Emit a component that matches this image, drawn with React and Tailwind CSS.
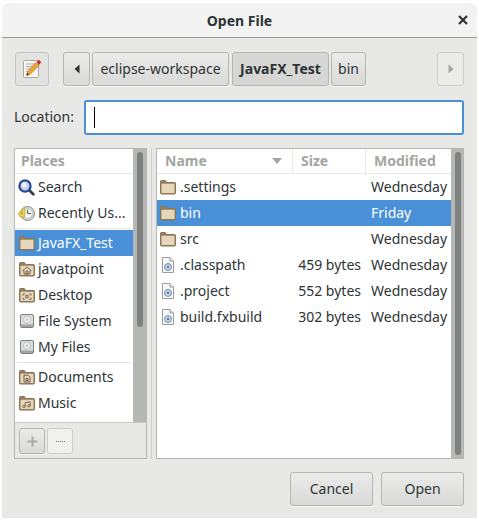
const font = { fontFamily: '"Noto Sans", sans-serif' };

function Folder({ badge }) {
  return (
    <svg width="16" height="16" viewBox="0 0 16 16" className="shrink-0">
      <path d="M0.5 14V2.3C0.5 1.8 0.8 1.5 1.3 1.5H5.3L6.8 3.5H14.5C15.1 3.5 15.5 3.9 15.5 4.5V14C15.5 14.6 15.1 15 14.5 15H1.5C0.9 15 0.5 14.6 0.5 14Z" fill="#94805f" stroke="#8a7554" strokeWidth="1" />
      <path d="M1.5 5.6C1.5 5.1 1.8 4.8 2.3 4.8H13.8C14.2 4.8 14.5 5.1 14.5 5.5V13.4C14.5 13.8 14.2 14 13.8 14H2.2C1.8 14 1.5 13.8 1.5 13.4Z" fill="#e6d6bb" />
      {badge === "home" && <path d="M8 6L3.8 9.6H5V13H11V9.6H12.2ZM7 10H9V13H7Z" fill="none" stroke="#6f5d42" strokeWidth="0.9" />}
      {badge === "desktop" && <path d="M4 7H5.8M10.2 7H12M4 7V8.6M12 7V8.6M4 10.8V12.4H5.8M12 10.8V12.4H10.2M6.8 8.3H9.2V10.8H6.8Z" fill="none" stroke="#6f5d42" strokeWidth="0.9" />}
      {badge === "doc" && <path d="M5 6.2H9L11 8.2V13H5ZM7 9.5H9V11.5H7Z" fill="none" stroke="#6f5d42" strokeWidth="1" />}
      {badge === "music" && <path d="M6.2 11.5V7.6L11.2 6.8V10.8M6.2 11.5A1.3 1.1 0 1 1 3.6 11.5A1.3 1.1 0 1 1 6.2 11.5ZM11.2 10.8A1.3 1.1 0 1 1 8.6 10.8A1.3 1.1 0 1 1 11.2 10.8Z" fill="none" stroke="#6f5d42" strokeWidth="0.9" />}
    </svg>
  );
}

function Doc() {
  return (
    <svg width="16" height="16" viewBox="0 0 16 16" className="shrink-0">
      <path d="M2.5 0.5H10L13.5 4V15.5H2.5Z" fill="#f7f7f6" stroke="#9b9e9b" />
      <path d="M10 0.5V4H13.5" fill="#e4e4e2" stroke="#9b9e9b" />
      <circle cx="8" cy="10" r="3.4" fill="#dfe7f1" stroke="#5f7fa6" />
      <circle cx="8" cy="10" r="1.4" fill="#5f7fa6" />
    </svg>
  );
}

function SearchIcon() {
  return (
    <svg width="17" height="17" viewBox="0 0 17 17" className="shrink-0">
      <path d="M10.5 10.5L15.3 15.3" stroke="#3c3c3c" strokeWidth="2.8" strokeLinecap="round" />
      <circle cx="7" cy="7" r="5.6" fill="#c4d3ec" stroke="#26479a" strokeWidth="2.2" />
      <circle cx="6.2" cy="6" r="2.4" fill="#eef3fb" />
    </svg>
  );
}

function RecentIcon() {
  return (
    <svg width="17" height="17" viewBox="0 0 17 17" className="shrink-0">
      <circle cx="9.5" cy="8.5" r="7" fill="#d9d9d6" stroke="#8d8d89" />
      <circle cx="9.7" cy="8.5" r="4.8" fill="#f6f6f5" stroke="#a9a9a6" strokeWidth="0.6" />
      <path d="M9.7 4.8V8.5H13" fill="none" stroke="#444" strokeWidth="0.9" />
      <path d="M0.4 8.6L5.8 2.5L7.2 6.2L6.4 12L2 12Z" fill="#ecd35a" stroke="#b89d2a" strokeWidth="0.7" />
      <path d="M4.5 5.5L3 8.5H5" fill="none" stroke="#b08d14" strokeWidth="0.8" />
    </svg>
  );
}

function DriveIcon() {
  return (
    <svg width="16" height="16" viewBox="0 0 16 16" className="shrink-0">
      <rect x="1.5" y="1.5" width="13" height="13" rx="1.5" fill="#dcdedb" stroke="#7d807d" />
      <rect x="2" y="11.5" width="12" height="2.5" fill="#a2a4a1" />
      <circle cx="8" cy="6.7" r="3.6" fill="#eceded" stroke="#b3b5b2" strokeWidth="0.7" />
      <circle cx="8" cy="6.7" r="1" fill="#b3b5b2" />
    </svg>
  );
}

function EditIcon() {
  return (
    <svg width="20" height="20" viewBox="0 0 20 20">
      <rect x="1.5" y="1.5" width="15" height="17" rx="1" fill="#f7f6f2" stroke="#a9a9a3" />
      <path d="M4 5H13M4 7.5H11M4 10H9M4 12.5H7" stroke="#9a9a94" strokeWidth="0.8" />
      <path d="M4.5 16.5L5.5 12.5L14 3.5L17 6.5L8.5 15Z" fill="#efa43a" stroke="#b5701a" strokeWidth="0.6" />
      <path d="M14.5 3L16 1.5C16.5 1 17.3 1 17.8 1.5L18.5 2.2C19 2.7 19 3.5 18.5 4L17 5.7Z" fill="#cf2030" />
      <path d="M4.5 16.5L5.2 13.7L7.2 15.7Z" fill="#3b3024" />
    </svg>
  );
}

function Place({ icon, label, selected }) {
  return (
    <div className={`flex h-[26px] items-center pl-[3px] gap-[3px] text-[14px] ${selected ? "bg-[#4a90d9] text-white" : "text-[#2e3436]"}`}>
      <span className="flex w-[17px] justify-center">{icon}</span>
      <span className="whitespace-nowrap pb-[2px]">{label}</span>
    </div>
  );
}

function FileRow({ icon, name, size, date, selected }) {
  return (
    <div className={`flex h-[26px] items-center text-[14px] ${selected ? "bg-[#4a90d9] text-white" : "text-[#2e3436]"}`}>
      <div className="flex w-[136px] items-center gap-[4px] pl-[3px]">{icon}<span className="pb-[2px]">{name}</span></div>
      <div className="w-[73px] pb-[2px] pr-[5px] text-right whitespace-nowrap">{size}</div>
      <div className="flex-1 pb-[2px] pl-[5px]">{date}</div>
    </div>
  );
}

const btn = "flex items-center justify-center rounded-[3px] border border-[#b5b6b2] bg-gradient-to-b from-[#ebebea] to-[#d9d9d7] text-[#2e3436] shadow-[0_1px_0_#ffffff80]";

export default function App() {
  return (
    <div style={font} className="h-[521px] w-[479px] bg-white pl-[2px] pr-[2px] pt-[3px] pb-[3px]">
      <div className="flex h-full flex-col overflow-hidden rounded-t-[8px] bg-[#e8e8e7]">
        <div className="flex h-[35px] shrink-0 items-center border-b border-[#999a96] bg-[#f3f3f3]">
          <div className="relative flex-1 text-center text-[14px] font-bold text-[#2e3436]">
            Open File
            <svg width="10" height="10" viewBox="0 0 10 10" className="absolute right-[9px] top-[5px]">
              <path d="M1 1L9 9M9 1L1 9" stroke="#2e3436" strokeWidth="2.2" />
            </svg>
          </div>
        </div>

        <div className="flex flex-1 flex-col pl-[12px] pr-[13px] pt-[14px]">
          <div className="flex h-[34px] items-center">
            <div className="ml-px flex h-[34px] w-[34px] items-center justify-center rounded-[3px] border border-[#c4c5c2] bg-[#e2e2e1]"><EditIcon /></div>
            <div className={`${btn} ml-[14px] h-[34px] w-[27px]`}>
              <svg width="6" height="10" viewBox="0 0 6 10"><path d="M5.5 0.5V9.5L0.5 5Z" fill="#2e3436" /></svg>
            </div>
            <div className={`${btn} ml-[2px] h-[34px] w-[137px] pb-[2px] text-[14px]`}>eclipse-workspace</div>
            <div className="ml-[3px] flex h-[34px] w-[97px] items-center justify-center rounded-[3px] border border-[#b5b6b2] bg-[#d6d6d4] pb-[2px] text-[14px] font-bold text-[#2e3436]">JavaFX_Test</div>
            <div className={`${btn} ml-[2px] h-[34px] w-[35px] pb-[2px] text-[14px]`}>bin</div>
            <div className="ml-[71px] flex h-[34px] w-[27px] items-center justify-center rounded-[3px] border border-[#cdcecb] bg-[#ebebea]">
              <svg width="6" height="10" viewBox="0 0 6 10"><path d="M0.5 0.5V9.5L5.5 5Z" fill="#a3a5a3" /></svg>
            </div>
          </div>

          <div className="mt-[14px] flex h-[35px] items-center">
            <span className="w-[70px] pb-[2px] text-[14px] text-[#2e3436]">Location:</span>
            <div className="flex h-[35px] flex-1 items-center rounded-[3px] border-2 border-[#4a90d9] bg-white pl-[8px]">
              <div className="h-[21px] w-px bg-black" />
            </div>
          </div>

          <div className="mt-[13px] flex h-[311px]">
            <div className="flex w-[133px] flex-col border border-[#b5b6b2]">
              <div className="flex min-h-0 flex-1">
                <div className="min-w-0 flex-1 bg-white">
                  <div className="flex h-[25px] items-center border-b border-[#e8e8e7] pb-[2px] pl-[6px] text-[14px] font-bold text-[#a3a5a2]">Places</div>
                  <Place icon={<SearchIcon />} label="Search" />
                  <Place icon={<RecentIcon />} label="Recently Us..." />
                  <div className="mx-[2px] mb-[1px] mt-[2px] h-px bg-[#e3e3e1]" />
                  <Place icon={<Folder />} label="JavaFX_Test" selected />
                  <Place icon={<Folder badge="home" />} label="javatpoint" />
                  <Place icon={<Folder badge="desktop" />} label="Desktop" />
                  <Place icon={<DriveIcon />} label="File System" />
                  <Place icon={<DriveIcon />} label="My Files" />
                  <div className="mx-[2px] mb-[1px] mt-[2px] h-px bg-[#e3e3e1]" />
                  <Place icon={<Folder badge="doc" />} label="Documents" />
                  <Place icon={<Folder badge="music" />} label="Music" />
                </div>
                <div className="w-[13px] shrink-0 bg-[#b5b7b4] pl-[4px] pr-[3px] pt-[3px]">
                  <div className="h-[175px] rounded-full bg-[#7e8180]" />
                </div>
              </div>
              <div className="flex h-[36px] shrink-0 items-start gap-[2px] border-t border-[#c9cac6] bg-[#e8e8e7] pl-[4px] pt-[5px]">
                <div className={`${btn} h-[26px] w-[26px] text-[#a3a5a2]`}>
                  <svg width="11" height="11" viewBox="0 0 11 11"><path d="M5.5 0.5V10.5M0.5 5.5H10.5" stroke="#a8aaa7" strokeWidth="2" /></svg>
                </div>
                <div className="flex h-[26px] w-[26px] items-center justify-center rounded-[3px] border border-[#cdcecb] bg-[#f0f0ef]">
                  <div className="w-[9px] border-t border-dotted border-[#777]" />
                </div>
              </div>
            </div>

            <div className="ml-[4px] w-px bg-[#cdcecb]" />
            <div className="ml-[4px] flex flex-1 border border-[#b5b6b2]">
              <div className="min-w-0 flex-1 bg-white">
                <div className="flex h-[25px] items-center border-b border-[#e8e8e7] text-[14px] font-bold text-[#a3a5a2]">
                  <div className="flex h-full w-[136px] items-center justify-between border-r border-[#e8e8e7] pb-[2px] pl-[8px] pr-[10px]">
                    <span>Name</span>
                    <svg width="10" height="6" viewBox="0 0 10 6" className="mt-[2px]"><path d="M0 0H10L5 6Z" fill="#a3a5a2" /></svg>
                  </div>
                  <div className="flex h-full w-[73px] items-center border-r border-[#e8e8e7] pb-[2px] pl-[8px]">Size</div>
                  <div className="pb-[2px] pl-[8px]">Modified</div>
                </div>
                <FileRow icon={<Folder />} name=".settings" date="Wednesday" />
                <FileRow icon={<Folder />} name="bin" date="Friday" selected />
                <FileRow icon={<Folder />} name="src" date="Wednesday" />
                <FileRow icon={<Doc />} name=".classpath" size="459 bytes" date="Wednesday" />
                <FileRow icon={<Doc />} name=".project" size="552 bytes" date="Wednesday" />
                <FileRow icon={<Doc />} name="build.fxbuild" size="302 bytes" date="Wednesday" />
              </div>
              <div className="w-[12px] shrink-0 bg-[#b5b7b4] pb-[3px] pl-[4px] pr-[2px] pt-[3px]">
                <div className="h-full rounded-full bg-[#7e8180]" />
              </div>
            </div>
          </div>

          <div className="mt-[13px] flex justify-end gap-[8px]">
            <div className={`${btn} h-[34px] w-[83px] pb-[2px] text-[14px]`}>Cancel</div>
            <div className={`${btn} h-[34px] w-[83px] pb-[2px] text-[14px]`}>Open</div>
          </div>
        </div>
      </div>
    </div>
  );
}
